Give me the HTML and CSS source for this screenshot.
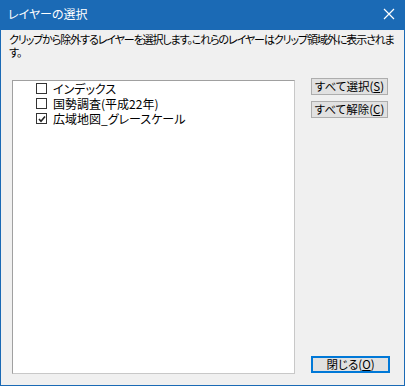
FILE: index.html
```html
<!DOCTYPE html>
<html lang="ja">
<head>
  <meta charset="UTF-8" />
  <title>レイヤーの選択</title>
  <link rel="stylesheet" href="styles.css">
</head>
<body>
  <div class="window">
    <div class="titlebar">
      <span class="title">レイヤーの選択</span>
      <svg class="close" width="12" height="12" viewBox="0 0 12 12">
        <path d="M1 1 L11 11 M11 1 L1 11" stroke="#fff" stroke-width="1.2" fill="none"/>
      </svg>
    </div>
    <div class="content">
      <p class="desc">クリップから除外するレイヤーを選択します。これらのレイヤーはクリップ領域外に表示されます。</p>
      <div class="main">
        <ul class="layers">
          <li><span class="check"></span><span>インデックス</span></li>
          <li><span class="check"></span><span>国勢調査(平成22年)</span></li>
          <li><span class="check on">
            <svg width="8" height="8" viewBox="0 0 8 8"><path d="M1 4 L3 6.2 L7 1.5" stroke="#222" stroke-width="1.6" fill="none"/></svg>
          </span><span>広域地図_グレースケール</span></li>
        </ul>
        <div class="side">
          <button class="btn">すべて選択(<u>S</u>)</button>
          <button class="btn">すべて解除(<u>C</u>)</button>
          <button class="btn default">閉じる(<u>O</u>)</button>
        </div>
      </div>
    </div>
  </div>
</body>
</html>
```

FILE: styles.css
```css
html, body {
  margin: 0;
  padding: 0;
}
body {
  font-family: "Noto Sans CJK JP", "Noto Sans", sans-serif;
  font-size: 12px;
  font-feature-settings: "palt";
  color: #000;
  background: #f0f0f0;
}
.window {
  width: 405px;
  height: 386px;
  box-sizing: border-box;
  border: 1px solid #1b6ab5;
  border-top: none;
  display: flex;
  flex-direction: column;
  background: #f0f0f0;
}
.titlebar {
  height: 30px;
  background: #1b6ab5;
  display: flex;
  align-items: center;
  justify-content: space-between;
  padding: 0 8px 0 7px;
  color: #fff;
  flex-shrink: 0;
}
.title {
  font-size: 12px;
  line-height: 14px;
  margin-top: -2px;
}
.close {
  margin-right: 1px;
  margin-top: -2px;
}
.content {
  flex: 1;
  display: flex;
  flex-direction: column;
  padding: 3px 12px 11px 8px;
}
.desc {
  margin: 0 -6px 0 0;
  line-height: 13px;
  font-size: 11px;
  letter-spacing: -1.1px;
}
.main {
  flex: 1;
  display: flex;
  margin-top: 21px;
  margin-left: 3px;
  gap: 17px;
}
.layers {
  list-style: none;
  margin: 0;
  padding: 0 0 0 23px;
  width: 258px;
  background: #fff;
  border: 1px solid #a0a0a0;
  border-right-color: #c8c8c8;
  border-bottom-color: #c8c8c8;
}
.layers li {
  height: 15px;
  display: flex;
  align-items: center;
  white-space: nowrap;
  font-size: 12px;
}
.layers li span:last-child {
  line-height: 14px;
}
.check {
  width: 9px;
  height: 9px;
  border: 1px solid #333;
  background: #fff;
  margin-right: 6px;
  display: flex;
  align-items: center;
  justify-content: center;
  flex-shrink: 0;
}
.side {
  display: flex;
  flex-direction: column;
  width: 77px;
  margin: -2px 0 1px -1px;
}
.btn {
  font-family: inherit;
  font-size: 11.5px;
  font-feature-settings: "palt";
  height: 17px;
  padding: 0;
  margin: 0 0 6px 0;
  line-height: 15px;
  background: #e1e1e1;
  border: 1px solid #adadad;
  color: #000;
}
.btn.default {
  margin-top: auto;
  margin-bottom: 0;
  width: 79px;
  border: 2px solid #0078d7;
  line-height: 13px;
}
```
